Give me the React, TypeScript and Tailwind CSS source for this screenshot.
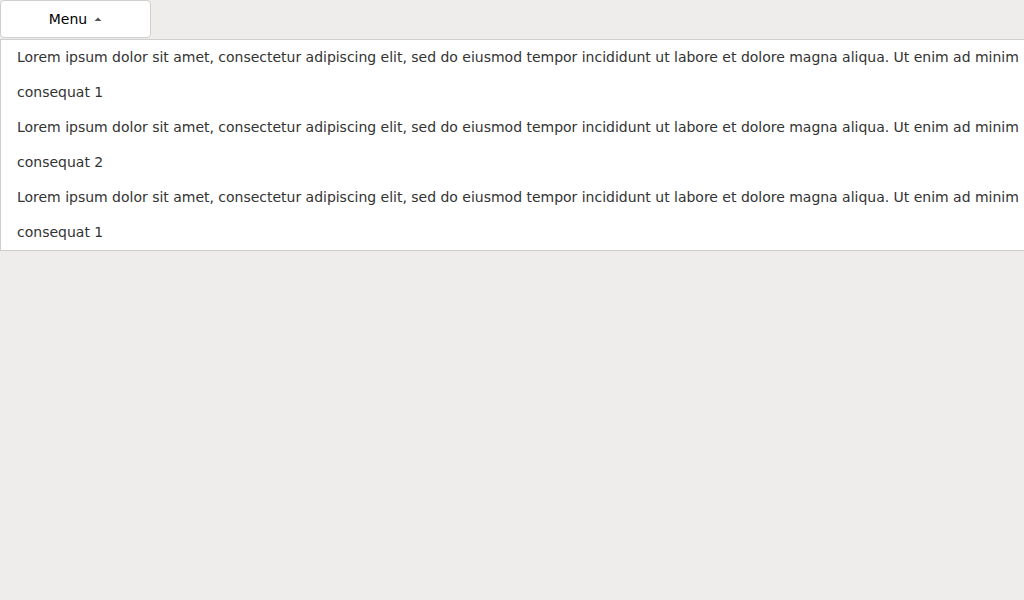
const LOREM =
  'Lorem ipsum dolor sit amet, consectetur adipiscing elit, sed do eiusmod tempor incididunt ut labore et dolore magna aliqua. Ut enim ad minim';

const lines = [LOREM, 'consequat 1', LOREM, 'consequat 2', LOREM, 'consequat 1'];

export default function App() {
  return (
    <div
      className="h-screen w-screen overflow-hidden bg-[#eeedeb] text-[14px]"
      style={{ fontFamily: '"DejaVu Sans", sans-serif' }}
    >
      <button className="flex h-[38px] w-[151px] items-center justify-center gap-[7px] rounded-[4px] border border-[#cfcfcf] bg-white text-black">
        <span>Menu</span>
        <svg width="8" height="4" viewBox="0 0 8 4" className="mt-[-1px]">
          <path d="M0.5 4 L4 0.5 L7.5 4 Z" fill="#555" />
        </svg>
      </button>
      <div className="mt-[1px] w-max border border-[#cfcfcf] bg-white">
        {lines.map((t, i) => (
          <div
            key={i}
            className={
              i % 2 === 0
                ? 'flex h-[35px] items-center whitespace-nowrap pl-4 pr-6 tracking-[-0.015px] text-[#333]'
                : 'flex h-[35px] items-center whitespace-nowrap pl-4 pr-6 text-[#333]'
            }
          >
            {t}
          </div>
        ))}
      </div>
    </div>
  );
}
